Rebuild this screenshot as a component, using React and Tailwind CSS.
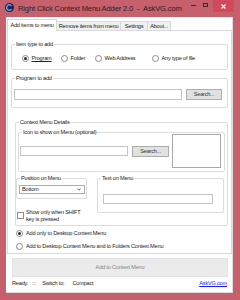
import React from "react";

const Radio = ({ on }) => (
  <span className="w-[7px] h-[7px] rounded-full border border-[#8c8c8c] bg-white flex items-center justify-center shrink-0">
    {on && <span className="w-[3px] h-[3px] rounded-full bg-[#2a2a2a]" />}
  </span>
);

const Group = ({ label, className = "", children }) => (
  <fieldset className={"border border-[#dcdcdc] rounded-[2px] min-w-0 " + className}>
    <legend className="ml-[3px] px-[1px] leading-[7px]">{label}</legend>
    {children}
  </fieldset>
);

const Btn = ({ className = "", children }) => (
  <div
    className={
      "border border-[#adadad] bg-[#e1e1e1] flex items-center justify-center leading-[7px] text-[#333] " +
      className
    }
  >
    {children}
  </div>
);

const TitleBar = () => (
  <div className="h-[17px] flex items-start shrink-0">
    <svg width="9" height="9" viewBox="0 0 10 10" className="ml-[5px] mt-[3px]">
      <circle cx="5" cy="5" r="5" fill="#17264f" />
      <path d="M7.2 3.2 A3 3 0 1 0 7.2 6.8" stroke="#6f9ee0" strokeWidth="1.6" fill="none" />
    </svg>
    <span className="ml-[4px] mt-[4px] text-[7.6px] leading-[9px] tracking-[-0.15px] text-[#2b1f22] whitespace-pre">
      Right Click Context Menu Adder 2.0  -  AskVG.com
    </span>
    <div className="ml-auto flex items-start">
      <span className="mt-[5px] w-[5px] h-[1px] bg-[#3a2a2d]" />
      <span className="ml-[7px] mt-[3px] w-[5px] h-[4px] border border-[#3a2a2d]" />
      <div className="ml-[5px] mr-[6px] w-[21px] h-[12px] bg-[#d04a5b] flex items-center justify-center">
        <svg width="5" height="5" viewBox="0 0 5 5">
          <path d="M0.5 0.5 L4.5 4.5 M4.5 0.5 L0.5 4.5" stroke="#fff" strokeWidth="1.1" />
        </svg>
      </div>
    </div>
  </div>
);

export default function App() {
  return (
    <div className="w-[240px] h-[300px] bg-[#c6606d] flex flex-col overflow-hidden font-['Liberation_Sans',Arial,sans-serif] text-[5.6px] tracking-[-0.2px] text-[#222]">
      <TitleBar />
      <div className="ml-[6px] w-[227px] mb-[7px] flex-1 bg-white border-r border-b border-[#dcdcdc] flex flex-col">
        {/* tabs */}
        <div className="h-[14px] pt-[2px] flex items-end shrink-0">
          <div className="ml-[1px] w-[50px] h-[12px] bg-white border border-b-0 border-[#d9d9d9] relative z-10 flex items-center justify-center pb-[1px]">
            Add items to menu
          </div>
          <div className="w-[64px] h-[10px] bg-[#f0f0f0] border border-l-0 border-[#d9d9d9] flex items-center justify-center">
            Remove items from menu
          </div>
          <div className="w-[27px] h-[10px] bg-[#f0f0f0] border border-l-0 border-[#d9d9d9] flex items-center justify-center">
            Settings
          </div>
          <div className="w-[23px] h-[10px] bg-[#f0f0f0] border border-l-0 border-[#d9d9d9] flex items-center justify-center">
            About...
          </div>
        </div>

        {/* tab panel */}
        <div className="ml-[1px] w-[225px] -mt-px border border-[#d9d9d9] px-[3px] pb-[3px]">
          <Group label="Item type to add" className="mt-[10px] pb-[7px]">
            <div className="mt-[6px] h-[8px] pl-[10px] flex items-center">
              <div className="w-[39px] flex items-center">
                <Radio on />
                <span className="ml-[2.5px] underline">Program</span>
              </div>
              <div className="w-[34px] flex items-center">
                <Radio />
                <span className="ml-[2.5px]">Folder</span>
              </div>
              <div className="w-[57px] flex items-center">
                <Radio />
                <span className="ml-[2.5px]">Web Address</span>
              </div>
              <div className="flex items-center">
                <Radio />
                <span className="ml-[2.5px]">Any type of file</span>
              </div>
            </div>
          </Group>

          <Group label="Program to add" className="mt-[5px] pb-[7px]">
            <div className="mt-[7px] flex items-center">
              <div className="ml-[2px] w-[168px] h-[11px] border border-[#c4c4c4] bg-white" />
              <Btn className="ml-[4px] w-[36px] h-[11px]">Search...</Btn>
            </div>
          </Group>

          <Group label="Context Menu Details" className="ml-[4px] mt-[11px] pb-[2px]">
            <Group label="Icon to show on Menu (optional)" className="ml-[2px] mr-[2px] mt-[3px] pb-[3px]">
              <div className="-mt-[2px] pl-[1px] flex items-center">
                <div className="w-[108px] h-[10px] border border-[#c4c4c4] bg-white" />
                <Btn className="ml-[4px] w-[37px] h-[11px]">Search...</Btn>
                <div className="ml-[3px] w-[49px] h-[34px] border border-[#a8a8a8] bg-white" />
              </div>
            </Group>

            <div className="mt-[3px] flex items-start">
              <div className="w-[71px] shrink-0">
                <Group label="Position on Menu" className="pb-[4px]">
                  <div className="ml-[2px] mt-[3px] w-[66px] h-[9px] border border-[#acacac] bg-white flex items-center pl-[2px] pr-[3px] leading-[7px]">
                    <span>Bottom</span>
                    <svg width="4" height="3" viewBox="0 0 4 3" className="ml-auto">
                      <path d="M0.3 0.5 L2 2.3 L3.7 0.5" stroke="#444" strokeWidth="0.8" fill="none" />
                    </svg>
                  </div>
                </Group>
                <div className="mt-[10px] flex items-start">
                  <span className="ml-[1px] mt-[2.5px] w-[7px] h-[7px] border border-[#8c8c8c] bg-white shrink-0" />
                  <span className="ml-[2px] leading-[7px]">
                    Show only when SHIFT
                    <br />
                    key is pressed
                  </span>
                </div>
              </div>
              <Group label="Text on Menu" className="ml-[10px] w-[127px] pb-[8px]">
                <div className="ml-[5px] mt-[12px] w-[110px] h-[10px] border border-[#c4c4c4] bg-white" />
              </Group>
            </div>
          </Group>

          <div className="mt-[4px] ml-[5px] h-[7px] flex items-center">
            <Radio on />
            <span className="ml-[3px]">Add only to Desktop Context Menu</span>
          </div>
          <div className="mt-[6px] ml-[5px] h-[7px] flex items-center">
            <Radio />
            <span className="ml-[3px]">Add to Desktop Context Menu and to Folders Context Menu</span>
          </div>
        </div>

        {/* main button */}
        <div className="ml-[6px] mt-[3.5px] w-[216px] h-[19px] bg-[#ebebeb] border border-[#e3e3e3] flex items-center justify-center text-[#858585]">
          Add to Context Menu
        </div>

        {/* status bar */}
        <div className="mt-[3px] pl-[6px] pr-[5px] flex items-center leading-[7px]">
          <span>Ready.</span>
          <span className="ml-[4px]">:::</span>
          <span className="ml-[6px]">Switch to:</span>
          <span className="ml-[8px]">Compact</span>
          <span className="ml-auto text-[#1a1aff] underline">AskVG.com</span>
        </div>
      </div>
    </div>
  );
}
